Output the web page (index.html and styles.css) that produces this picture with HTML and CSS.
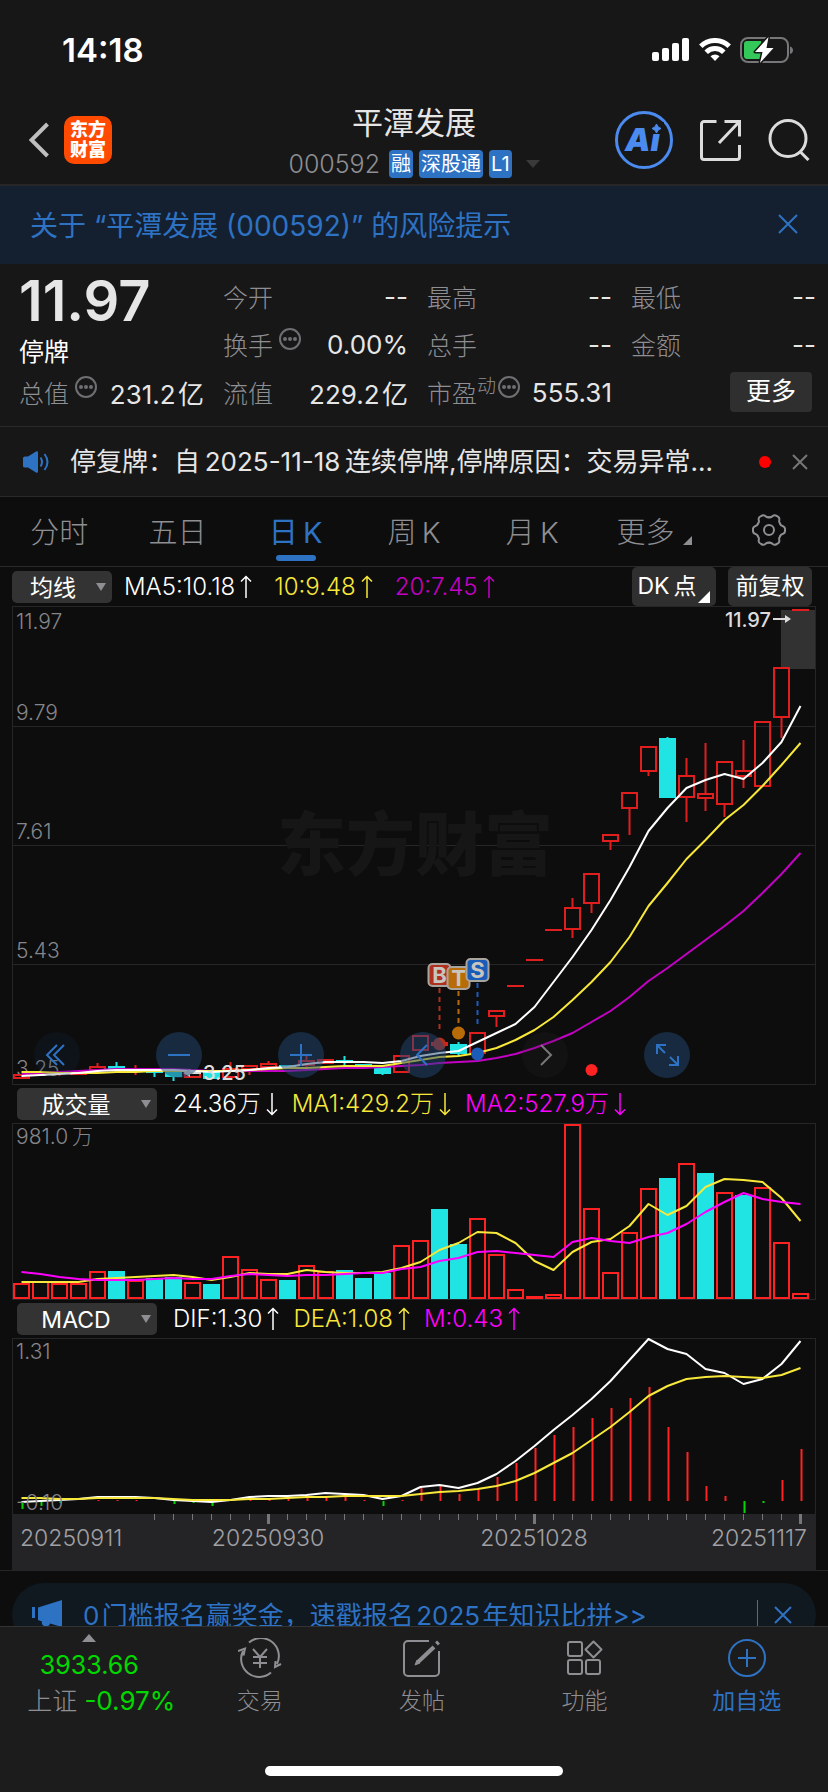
FILE: index.html
```html
<!DOCTYPE html>
<html lang="zh-CN">
<head>
<meta charset="utf-8">
<meta name="viewport" content="width=device-width, initial-scale=1">
<title>平潭发展 000592</title>
<link rel="stylesheet" href="styles.css">
</head>
<body>
<div class="screen">
  <main class="content">
    <div class="status">
      <span class="clock">14:18</span>
      <div class="status-icons">
        <svg width="38" height="24" viewBox="0 0 38 24" fill="#fff"><rect x="0" y="14" width="7" height="9" rx="2"/><rect x="10" y="10" width="7" height="13" rx="2"/><rect x="20" y="5" width="7" height="18" rx="2"/><rect x="30" y="0" width="7" height="23" rx="2"/></svg>
        <svg width="32" height="24" viewBox="0 0 32 24" fill="none" stroke="#fff" stroke-width="5"><path d="M1.800 8.200a20.500 20.500 0 0 1 28.400 0"/><path d="M7.200 14.200a12.600 12.600 0 0 1 17.600 0"/><path d="M11.500 18.300a6.600 6.600 0 0 1 9 0L16 23z" fill="#fff" stroke="none"/></svg>
        <svg width="54" height="26" viewBox="0 0 54 26"><rect x="1" y="1" width="47" height="24" rx="7" fill="none" stroke="#77777a" stroke-width="2"/><path d="M7 4h14v18H7a3 3 0 0 1-3-3V7a3 3 0 0 1 3-3z" fill="#34c759"/><path d="M50 9.500c4 1 4 6.500 0 7.500z" fill="#77777a"/><path d="M28.500 0 15 15h7.500L20 26 33.500 11h-7z" fill="#fff" stroke="#171717" stroke-width="3" paint-order="stroke" stroke-linejoin="round"/></svg>
      </div>
    </div>

    <header class="header">
      <div class="header-left">
        <button class="icon-btn" aria-label="返回"><svg width="20" height="36" viewBox="0 0 20 36" fill="none" stroke="#bfbfbf" stroke-width="4"><path d="M18.500 2 2.500 18l16 16"/></svg></button>
        <a class="logo" href="#"><span>东方</span><span>财富</span></a>
      </div>
      <div class="title-block">
        <h1>平潭发展</h1>
        <div class="subtitle"><span class="code">000592</span><span class="tag">融</span><span class="tag">深股通</span><span class="tag">L1</span><svg class="sub-caret" width="14" height="8" viewBox="0 0 14 8"><path d="M0 0h14L7 8z" fill="#3a3a3a"/></svg></div>
      </div>
      <div class="header-right">
        <button class="icon-btn" aria-label="Ai"><svg width="58" height="58" viewBox="0 0 58 58"><circle cx="29" cy="29" r="27.500" fill="none" stroke="#4b8bf0" stroke-width="3"/><text class="ai" x="10" y="40">Ai</text><rect x="35" y="11" width="14" height="12" fill="#171717"/><path d="M41.500 13q1 3.500 4.500 4.500-3.500 1-4.500 4.500-1-3.500-4.500-4.500 3.500-1 4.500-4.500z" fill="#4b8bf0" stroke="#4b8bf0"/></svg></button>
        <button class="icon-btn" aria-label="分享"><svg width="41" height="41" viewBox="0 0 41 41" fill="none" stroke="#dcdcdc" stroke-width="3"><path d="M16.500 1.500H4a2.500 2.500 0 0 0-2.500 2.500v33A2.500 2.500 0 0 0 4 39.500h33a2.500 2.500 0 0 0 2.500-2.500V25M24.500 1.500h15v15M39 2 19 23"/></svg></button>
        <button class="icon-btn" aria-label="搜索"><svg width="42" height="42" viewBox="0 0 42 42" fill="none" stroke="#dcdcdc" stroke-width="3"><circle cx="20" cy="19.500" r="18"/><path d="m31.500 32 9 9" stroke-width="3"/></svg></button>
      </div>
    </header>

    <div class="notice">
      <a href="#">关于 “平潭发展 (000592)” 的风险提示</a>
      <button class="icon-btn" aria-label="关闭"><svg width="20" height="20" viewBox="0 0 20 20" stroke="#2e72c4" stroke-width="2"><path d="m1 1 18 18M19 1 1 19"/></svg></button>
    </div>

    <section class="quote">
      <div class="price-box"><strong class="price">11.97</strong><span class="state">停牌</span></div>
      <div class="cell"><span class="lbl">今开</span><span>--</span></div>
      <div class="cell"><span class="lbl">最高</span><span>--</span></div>
      <div class="cell"><span class="lbl">最低</span><span>--</span></div>
      <div class="cell"><span class="lbl">换手<svg class="info"><use href="#dots"/></svg></span><span>0.00%</span></div>
      <div class="cell"><span class="lbl">总手</span><span>--</span></div>
      <div class="cell"><span class="lbl">金额</span><span>--</span></div>
      <div class="cell"><span class="lbl">总值<svg class="info"><use href="#dots"/></svg></span><span>231.2&#8202;亿</span></div>
      <div class="cell"><span class="lbl">流值</span><span>229.2&#8202;亿</span></div>
      <div class="cell pe"><span class="lbl">市盈<small>动</small><svg class="info"><use href="#dots"/></svg></span><span>555.31</span></div>
      <div class="cell end"><button class="more">更多</button></div>
    </section>

    <div class="news">
      <svg width="28" height="22" viewBox="0 0 28 22" fill="none" stroke="#2e72c4" stroke-width="2"><path d="M1 7q0-1.500 2-1.500h3L14 .5q2-1 2 1v19q0 2-2 1l-8-5H3q-2 0-2-1.500z" fill="#2e72c4" stroke="none"/><path d="M18.500 6.500q3 4.500 0 9M22.500 3q6 8 0 16"/></svg>
      <a class="news-text" href="#">停复牌：自&#8201;2025-11-18&#8201;连续停牌,停牌原因：交易异常...</a>
      <i class="red-dot"></i>
      <button class="icon-btn" aria-label="关闭公告"><svg width="16" height="16" viewBox="0 0 16 16" stroke="#77777a" stroke-width="2"><path d="m1 1 14 14M15 1 1 15"/></svg></button>
    </div>

    <nav class="tabs" aria-label="周期">
      <button>分时</button><button>五日</button><button class="active">日&#8201;K</button><button>周&#8201;K</button><button>月&#8201;K</button>
      <button class="tab-more">更多<svg class="corner" width="9" height="9" viewBox="0 0 9 9"><path d="M9 0v9H0z" fill="#8e8e93"/></svg></button>
      <button aria-label="设置"><svg width="34" height="34" viewBox="-17 -17 34 34" fill="none" stroke="#8e8e93" stroke-width="2" stroke-linecap="round"><circle r="5"/><path id="tooth" d="M11-6.400Q11.600-4.400 14-3.800 16.400-3 16 0 16.400 3 14 3.800 11.600 4.400 11 6.400"/><use href="#tooth" transform="rotate(60)"/><use href="#tooth" transform="rotate(120)"/><use href="#tooth" transform="rotate(180)"/><use href="#tooth" transform="rotate(240)"/><use href="#tooth" transform="rotate(300)"/></svg></button>
    </nav>

    <section class="charts">
      <div class="bar main-bar">
        <div class="pick narrow"><select aria-label="主图指标"><option>均线</option></select><svg class="pick-caret" width="10" height="8"><use href="#caret"/></svg></div>
        <span class="white">MA5:10.18<svg class="arrow"><use href="#up"/></svg></span>
        <span class="yellow">10:9.48<svg class="arrow"><use href="#up"/></svg></span>
        <span class="purple">20:7.45<svg class="arrow"><use href="#up"/></svg></span>
        <div class="bar-end"><button class="chip">DK&#8201;点<svg class="chip-corner" width="12" height="12" viewBox="0 0 12 12"><path d="M12 0v12H0z" fill="#fff"/></svg></button><button class="chip">前复权</button></div>
      </div>
      <div class="k-wrap">
        <svg id="kline" class="plot" viewBox="12 606 804 479"></svg>
        <div class="tools">
          <button class="dim" aria-label="最早"><svg viewBox="0 0 46 46"><path d="M23 13 13 23l10 10M30 13 20 23l10 10"/></svg></button>
          <button aria-label="缩小"><svg viewBox="0 0 46 46"><path d="M12 23h22"/></svg></button>
          <button aria-label="放大"><svg viewBox="0 0 46 46"><path d="M12 23h22M23 12v22"/></svg></button>
          <button aria-label="向前"><svg viewBox="0 0 46 46"><path d="M27 13 17 23l10 10"/></svg></button>
          <button class="off" aria-label="向后"><svg viewBox="0 0 46 46"><path d="m19 13 10 10-10 10"/></svg></button>
          <button aria-label="全屏"><svg viewBox="0 0 46 46"><path d="M13 22v-9h9M13 13l8 8M34 24v9h-9M34 33l-8-8"/></svg></button>
        </div>
      </div>
      <div class="bar">
        <div class="pick"><select aria-label="副图一"><option>成交量</option></select><svg class="pick-caret" width="10" height="8"><use href="#caret"/></svg></div>
        <span class="white">24.36万<svg class="arrow"><use href="#down"/></svg></span>
        <span class="yellow">MA1:429.2万<svg class="arrow"><use href="#down"/></svg></span>
        <span class="magenta">MA2:527.9万<svg class="arrow"><use href="#down"/></svg></span>
      </div>
      <svg id="volume" class="plot" viewBox="12 1123 804 177"></svg>
      <div class="bar">
        <div class="pick"><select aria-label="副图二"><option>MACD</option></select><svg class="pick-caret" width="10" height="8"><use href="#caret"/></svg></div>
        <span class="white">DIF:1.30<svg class="arrow"><use href="#up"/></svg></span>
        <span class="yellow">DEA:1.08<svg class="arrow"><use href="#up"/></svg></span>
        <span class="magenta">M:0.43<svg class="arrow"><use href="#up"/></svg></span>
      </div>
      <svg id="macd" class="plot" viewBox="12 1338 804 232"></svg>
    </section>

    <div class="promo-area">
      <div class="promo">
        <svg width="30" height="30" viewBox="0 0 30 30" fill="#2e72c4"><path d="M0 7h3v11H0zM6 7.500 30 0v27l-12-3.500q-1 4-6 2.500-3-1.500-2-4.500L6 20z"/></svg>
        <a href="#">0&#8202;门槛报名赢奖金，速戳报名&#8202;2025&#8202;年知识比拼&gt;&gt;</a>
        <i class="promo-line"></i>
        <button class="icon-btn" aria-label="关闭活动"><svg width="18" height="18" viewBox="0 0 18 18" stroke="#2e72c4" stroke-width="2"><path d="m1 1 16 16M17 1 1 17"/></svg></button>
      </div>
    </div>
  </main>

  <footer class="dock">
    <nav class="dock-row" aria-label="底部导航">
      <a class="index" href="#"><svg width="14" height="8" viewBox="0 0 14 8"><path d="M7 0l7 8H0z" fill="#8e8e93"/></svg><span class="idx-val">3933.66</span><span class="idx-line">上证 <b>-0.97%</b></span></a>
      <button><svg width="44" height="40" viewBox="0 0 44 40"><path d="M11 4.500A18 18 0 0 1 39 26M33 34.500A18 18 0 0 1 5 13M0 13l7-2.500-1.500 7M43 26l-6 3 .5-6"/><path d="m15 11 7 8 7-8M22 19v11M15 19h14M15 25h14"/></svg>交易</button>
      <button><svg width="40" height="40" viewBox="0 0 40 40"><path d="M27 3H6a4 4 0 0 0-4 4v27a4 4 0 0 0 4 4h27a4 4 0 0 0 4-4V13"/><path d="M32 9 16 24" stroke-width="4"/><path d="m15 22-2 5 5-2z" fill="#8e8e93" stroke-width="1"/><path d="m34.500 6 2-2" stroke-width="4"/></svg>发帖</button>
      <button><svg width="40" height="40" viewBox="0 0 40 40"><rect x="4" y="4" width="14" height="14" rx="2"/><rect x="4" y="22" width="14" height="14" rx="2"/><rect x="22" y="22" width="14" height="14" rx="2"/><path d="m29.500 3.500 8 8-8 8-8-8z" stroke-linejoin="round"/></svg>功能</button>
      <button class="add"><svg width="40" height="40" viewBox="0 0 40 40"><circle cx="20" cy="20" r="18"/><path d="M11 20h18M20 11v18"/></svg>加自选</button>
    </nav>
    <div class="home-bar"></div>
  </footer>
</div>

<svg class="sprite" aria-hidden="true">
  <symbol id="dots" viewBox="0 0 22 22"><circle cx="11" cy="11" r="10" fill="none" stroke="#6f6f73" stroke-width="2"/><circle cx="6" cy="11" r="2" fill="#6f6f73"/><circle cx="11" cy="11" r="2" fill="#6f6f73"/><circle cx="16" cy="11" r="2" fill="#6f6f73"/></symbol>
  <symbol id="caret" viewBox="0 0 10 8"><path d="M0 0h10L5 8z" fill="#8e8e93"/></symbol>
  <symbol id="up" viewBox="0 0 12 24"><path d="M6 23V1.500M1 6.500l5-5 5 5" fill="none" stroke="currentColor" stroke-width="1.500"/></symbol>
  <symbol id="down" viewBox="0 0 12 24"><path d="M6 1v21.500M1 17.500l5 5 5-5" fill="none" stroke="currentColor" stroke-width="1.500"/></symbol>
</svg>
<script src="charts.js"></script>
</body>
</html>
```

FILE: styles.css
```css
* { box-sizing: border-box; }
body { margin: 0; background: #171717; color: #e6e6e6; font-family: Inter, "Noto Sans CJK SC", sans-serif; font-size: 25px; }
button, select { font: inherit; color: inherit; background: none; border: 0; padding: 0; margin: 0; }
a { color: inherit; text-decoration: none; }
svg { display: block; flex: none; }
.sprite { position: absolute; width: 0; height: 0; }
.screen { height: 100vh; display: flex; flex-direction: column; }
.content { flex: 1; min-height: 0; overflow: hidden; }
.icon-btn { flex: none; display: block; }

.status { display: flex; justify-content: space-between; align-items: center; height: 100px; padding: 0 34px 0 62px; }
.clock { font-size: 33px; font-weight: 600; color: #fff; }
.status-icons { display: flex; align-items: center; gap: 9px; }

.header { display: grid; grid-template-columns: 1fr auto 1fr; align-items: center; height: 86px; padding: 0 18px 2px; border-bottom: 2px solid #262626; }
.header-left, .header-right { display: flex; align-items: center; padding-bottom: 2px; }
.header-left { gap: 15px; padding-left: 11px; }
.header-right { justify-content: flex-end; gap: 27px; }
.logo { display: flex; flex-direction: column; align-items: center; justify-content: center; width: 48px; height: 48px; border-radius: 10px; background: #ff4a00; color: #fff; font-size: 18px; line-height: 20px; font-weight: 900; }
.title-block { display: flex; flex-direction: column; align-items: center; }
h1 { margin: 0; font-size: 31px; line-height: 46px; font-weight: 400; }
.subtitle { display: flex; align-items: center; height: 36px; gap: 6px; }
.code { font-size: 25px; color: #8e8e93; font-weight: 300; margin-right: 3px; }
.tag { background: #2e72c4; color: #fff; border-radius: 4px; font-size: 20px; line-height: 28px; padding: 0 2px; }
.sub-caret { margin-left: 8px; }
.ai { font-size: 32px; font-weight: 900; font-style: italic; fill: #4b8bf0; }

.notice { display: flex; align-items: center; justify-content: space-between; height: 78px; padding: 0 30px 2px; background: #14202f; color: #2e72c4; font-size: 28px; }

.quote { display: grid; grid-template-columns: repeat(4, 1fr); grid-auto-rows: 48px; column-gap: 19px; padding: 8px 12px 10px 19px; border-bottom: 1px solid #2a2a2a; }
.price-box { grid-row: span 2; display: flex; flex-direction: column; }
.price { font-size: 56px; line-height: 58px; font-weight: 600; }
.state { line-height: 44px; color: #fff; }
.cell { display: flex; align-items: center; justify-content: space-between; white-space: nowrap; font-size: 26px; }
.lbl { display: flex; align-items: center; color: #8e8e93; font-weight: 300; font-size: 25px; }
.lbl small { font-size: 19px; padding-bottom: 16px; }
.info { width: 22px; height: 22px; margin: 0 0 10px 6px; }
.pe .info { margin-left: 2px; }
.end { justify-content: flex-end; padding-right: 4px; }
.more { width: 82px; height: 40px; border-radius: 4px; background: #2f2f2f; color: #fff; font-size: 25px; line-height: 38px; padding-bottom: 2px; }

.news { display: flex; align-items: center; height: 70px; padding: 0 20px 0 22px; border-bottom: 1px solid #2a2a2a; }
.news-text { flex: 1; margin-left: 20px; padding-bottom: 4px; white-space: nowrap; font-size: 26px; }
.red-dot { width: 12px; height: 12px; border-radius: 50%; background: #f00; margin-right: 21px; }

.tabs { display: grid; grid-template-columns: repeat(7, 1fr); height: 70px; background: #0d0d0d; border-bottom: 1px solid #2a2a2a; color: #8e8e93; font-size: 29px; font-weight: 300; }
.tabs button { position: relative; display: flex; align-items: center; justify-content: center; padding-bottom: 4px; }
.tabs .active { color: #2e72c4; font-weight: 400; }
.tabs .active::after { content: ""; position: absolute; bottom: 5px; width: 40px; height: 6px; border-radius: 3px; background: #2e72c4; }
.tabs .tab-more { padding-left: 7px; }
.corner { margin: 22px 0 0 8px; }

.charts { background: #0d0d0d; padding: 0 12px; }
.bar { display: flex; align-items: center; gap: 14px; height: 38px; padding-left: 5px; font-size: 24px; font-weight: 300; white-space: nowrap; }
.bar .pick + span { margin-left: 2px; }
.main-bar { height: 39px; padding-left: 0; gap: 22px; }
.main-bar .pick { margin-right: -12px; }
.bar span { display: flex; align-items: center; line-height: 32px; }
.arrow { width: 12px; height: 24px; margin-left: 5px; }
.white { color: #fff; }
.yellow { color: #f8e83a; }
.purple { color: #c400c4; }
.magenta { color: #f0f; }
.pick { position: relative; width: 140px; height: 32px; border-radius: 5px; background: #333; color: #fff; font-weight: 400; font-size: 23px; }
.pick select { appearance: none; width: 100%; height: 100%; padding: 2px 22px 0 0; text-align: center; text-align-last: center; }
.pick.narrow { width: 100px; }
.pick.narrow select { padding-right: 18px; }
.pick-caret { position: absolute; right: 6px; top: 12px; pointer-events: none; }
.bar-end { display: flex; gap: 12px; margin-left: auto; padding-right: 4px; }
.chip { position: relative; width: 84px; height: 39px; border-radius: 5px; background: #2f2f2f; color: #fff; font-size: 23px; line-height: 39px; font-weight: 400; text-align: center; white-space: nowrap; }
.chip:first-child { padding-right: 14px; }
.chip-corner { position: absolute; right: 6px; bottom: 3px; }

.plot { width: 100%; height: auto; }
.plot text { font-size: 21px; fill: #85858a; font-weight: 300; }
.plot .tag-text { fill: #dcdcdc; font-weight: 500; font-size: 20px; }
.plot .mark-text { fill: #c8c4c0; font-weight: 700; font-size: 22px; }
.plot .axis-text { fill: #a0a0a5; font-size: 23px; }
.plot .watermark { fill: #161616; font-weight: 900; font-size: 69px; }
.k-wrap { position: relative; }
.tools { position: absolute; left: 22px; bottom: 7px; display: flex; gap: 76px; }
.tools button { width: 46px; height: 46px; border-radius: 50%; background: rgba(34, 72, 116, .5); }
.tools .dim { background: rgba(20, 45, 75, .2); }
.tools .off { background: rgba(40, 40, 40, .2); }
.tools path { fill: none; stroke: #2e72c4; stroke-width: 2; }
.tools .off path { stroke: #77777a; }

.promo-area { background: #0d0d0d; border-top: 1px solid #262626; padding: 12px 12px 0; }
.promo { display: flex; align-items: center; height: 64px; padding: 0 24px 0 20px; border-radius: 32px; background: #101820; color: #2e72c4; font-size: 26px; }
.promo a { flex: 1; margin-left: 21px; padding-bottom: 3px; white-space: nowrap; }
.promo-line { width: 1px; height: 30px; margin-right: 16px; background: #2e72c4; }

.dock { background: #1c1c1c; border-top: 1px solid #333; padding-bottom: 16px; }
.dock-row { display: grid; grid-template-columns: 22fr 20fr 20fr 20fr 20fr; height: 139px; color: #8e8e93; font-weight: 300; }
.dock-row button { display: flex; flex-direction: column; align-items: center; padding-top: 11px; font-size: 23px; line-height: 46px; }
.dock-row button svg { fill: none; stroke: #8e8e93; stroke-width: 2; }
.dock-row .add { color: #2e72c4; font-weight: 400; }
.dock-row .add svg { stroke: #2e72c4; }
.index { display: flex; flex-direction: column; align-items: center; padding-top: 7px; white-space: nowrap; }
.idx-val { color: #00d800; font-size: 25px; line-height: 47px; font-weight: 400; }
.idx-line { line-height: 24px; padding-left: 24px; }
.idx-line b { color: #00d800; font-weight: 400; font-size: 26px; }
.home-bar { width: 36%; height: 10px; margin: 0 auto; border-radius: 5px; background: #fff; }
```

FILE: charts.js
```js
const RED = '#e01e1e', BRIGHT = '#ff2222', CYAN = '#20e4e4', GRID = '#262628';
const x = i => 21.5 + 19 * i;
const rect = (l, t, w, h, fill, stroke) =>
  `<rect x="${l}" y="${t}" width="${w}" height="${h}" fill="${fill}"${stroke ? ` stroke="${stroke}" stroke-width="2"` : ''}/>`;
const seg = (x1, y1, x2, y2, c, w = 1, extra = '') =>
  `<path d="M${x1} ${y1}L${x2} ${y2}" stroke="${c}" stroke-width="${w}" ${extra}/>`;
const line = (ys, c) =>
  `<polyline points="${ys.map((y, i) => x(i) + ',' + y).join(' ')}" fill="none" stroke="${c}" stroke-width="2" stroke-linejoin="round"/>`;
const text = (tx, ty, s, cls = '', anchor = 'start') =>
  `<text x="${tx}" y="${ty}" class="${cls}" text-anchor="${anchor}">${s}</text>`;
const frame = (t, h) => rect(12.5, t + 0.5, 803, h - 1, 'none').replace('/>', ` stroke="${GRID}"/>`);

/* each candle: body top, body bottom, high, low, falling */
const candles = [
  [1075,1078,1075,1079],[1074,1075,1073,1076],[1073,1074,1072,1076],[1072,1074,1071,1075],[1067,1070,1063,1073],
  [1066,1069,1062,1071,1],[1070,1071,1065,1075],[1071,1073,1070,1077,1],[1070,1077,1069,1081,1],[1073,1077,1073,1078],
  [1072,1079,1072,1079,1],[1069,1077,1062,1077],[1066,1069,1065,1075],[1064,1067,1061,1067],[1065,1067,1065,1067,1],
  [1061,1065,1056,1068],[1060,1063,1059,1064],[1060,1063,1056,1065,1],[1064,1066,1064,1067,1],[1067,1074,1067,1075,1],
  [1056,1072,1056,1073],[1036,1050,1036,1050],[1043,1045,1041,1047],[1044,1054,1042,1056,1],[1033,1053,1033,1053],
  [1011,1016,1011,1027],[986,986,986,986],[960,960,960,960],[930,930,930,930],[908,929,898,938],
  [874,903,874,913],[835,841,835,850],[793,808,793,835],[747,771,747,776],[738,798,737,798,1],
  [776,797,758,822],[794,798,743,811],[762,804,762,817],[771,776,740,788],[722,786,722,786],[668,717,668,738],[610,610,610,610]
];
const ma5 = [1076,1075,1074,1073,1071,1070,1070,1070,1070,1071,1072,1071,1070,1068,1067,1064,1062,1062,1062,1063,1061,1056,1053,1051,1042,1033,1024,1007,982,957,930,900,867,831,808,788,780,774,779,763,742,706];
const ma10 = [1072,1072,1073,1073,1073,1072,1072,1071,1071,1071,1071,1071,1070,1069,1068,1068,1067,1066,1066,1066,1063,1060,1057,1056,1053,1048,1040,1030,1017,1000,982,962,937,906,883,859,840,820,805,786,765,743];
const ma20 = [1074,1073,1072,1071,1070,1069,1069,1069,1069,1070,1071,1071,1071,1071,1071,1070,1069,1068,1068,1067,1066,1065,1063,1062,1061,1058,1054,1048,1041,1033,1022,1011,997,981,968,954,940,926,911,893,874,853];

let k = frame(606, 479) + [726.5, 845.5, 964.5].map(y => seg(13, y, 815, y, GRID)).join('');
k += text(415, 870, '东方财富', 'watermark', 'middle');
k += rect(781, 610, 34, 59, '#323232');
[['11.97', 629], ['9.79', 720], ['7.61', 839], ['5.43', 958], ['3.25', 1076]].forEach(a => k += text(16, a[1], a[0]));
candles.forEach(([t, b, hi, lo, down], i) => {
  const c = down ? CYAN : RED, h = b - t;
  if (down) k += seg(x(i), hi, x(i), lo, c, 2) + rect(x(i) - 8.5, t, 17, h, c);
  else {
    k += seg(x(i), hi, x(i), t, c, 2) + seg(x(i), b, x(i), lo, c, 2);
    k += h < 2 ? rect(x(i) - 8.5, t - 1, 17, 2, c) : rect(x(i) - 7.5, t, 15, h, 'none', c);
  }
});
k += line(ma20, '#c400c4') + line(ma10, '#f8e83a') + line(ma5, '#fff');
k += text(771, 627, '11.97', 'tag-text', 'end') + seg(773, 619, 787, 619, '#dcdcdc', 2) + '<path d="M785 615l6 4-6 4z" fill="#dcdcdc"/>';
k += text(203, 1080, '3.25', 'tag-text') + seg(188, 1073, 201, 1073, '#dcdcdc', 2) + '<path d="M190 1069l-7 4 7 4z" fill="#dcdcdc"/>';
[['B', 439.5, 975, 1031, '#b0301f', 1044], ['T', 458.5, 978, 1027, '#b86c08', 1033], ['S', 477.5, 970, 1026, '#1a5cb8', 1054]].forEach(([s, cx, cy, end, c, dot]) => {
  k += seg(cx, cy + 13, cx, end, c, 2, 'stroke-dasharray="5 4"');
  k += `<circle cx="${cx}" cy="${dot}" r="6.5" fill="${c}"/>`;
  k += `<rect x="${cx - 11}" y="${cy - 11}" width="22" height="22" rx="4" fill="${c}" stroke="#aaa49e" stroke-width="2"/>`;
  k += text(cx, cy + 8, s, 'mark-text', 'middle');
});
k += `<circle cx="591.5" cy="1070" r="6" fill="${BRIGHT}"/>`;
document.getElementById('kline').innerHTML = k;

const tops = [1283,1281,1283,1283,1271,1271,1280,1278,1277,1282,1284,1256,1269,1279,1280,1265,1271,1270,1278,1273,1245,1240,1209,1244,1218,1254,1289,1296,1294,1124,1208,1272,1232,1188,1178,1163,1173,1192,1195,1187,1242,1293];
const falling = new Set([5, 7, 8, 10, 14, 17, 18, 19, 22, 23, 34, 36, 38]);
const vma1 = [1282,1282,1282,1282,1279,1278,1277,1276,1275,1277,1280,1277,1273,1274,1274,1270,1272,1273,1273,1272,1268,1262,1250,1243,1232,1233,1243,1261,1270,1252,1242,1239,1226,1204,1215,1206,1187,1179,1180,1182,1198,1221];
const vma2 = [1272,1274,1277,1279,1280,1280,1280,1279,1278,1279,1279,1276,1274,1275,1276,1275,1275,1274,1273,1273,1269,1267,1261,1258,1252,1251,1253,1255,1257,1242,1238,1241,1243,1237,1233,1224,1212,1202,1193,1199,1202,1204];
let v = frame(1123, 177) + text(16, 1144, '981.0\u2009万');
tops.forEach((t, i) => {
  v += falling.has(i) ? rect(x(i) - 8.5, t, 17, 1299 - t, CYAN) : rect(x(i) - 7.5, t + 1, 15, 1298 - t - 1, 'none', BRIGHT);
});
v += line(vma1, '#f8e83a') + line(vma2, '#f0f');
document.getElementById('volume').innerHTML = v;

const bars = [-8,-5,-2,0,1,1,1,0,-3,-2,-5,0,2,3,2,3,4,4,1,-5,1,13,15,7,12,24,38,53,66,74,83,93,103,114,74,49,15,5,-12,-2,21,52];
const dif = [1502,1501,1500,1499,1497,1497,1497,1498,1500,1501,1502,1500,1497,1496,1496,1495,1493,1494,1495,1499,1496,1487,1485,1488,1483,1474,1461,1446,1430,1415,1399,1381,1360,1339,1349,1354,1369,1373,1384,1379,1364,1341];
const dea = [1498,1498,1499,1499,1498,1498,1498,1498,1499,1500,1500,1500,1499,1499,1498,1497,1497,1496,1496,1496,1496,1494,1492,1491,1489,1486,1481,1473,1463,1453,1440,1427,1412,1396,1386,1379,1377,1376,1377,1378,1375,1368];
let m = frame(1338, 177) + rect(12, 1514, 804, 56, '#242426') + text(16, 1359, '1.31');
bars.forEach((b, i) => {
  if (b) m += seg(x(i) + 1, 1501, x(i) + 1, 1501 - b, b > 0 ? BRIGHT : '#00d800', 2);
});
m += line(dif, '#fff') + line(dea, '#f8e83a') + text(16, 1510, '-0.10');
for (let i = 7; i < 42; i++) {
  const major = i % 14 === 13;
  m += seg(x(i), 1514, x(i), major ? 1524 : 1520, '#77777a', major ? 3 : 1);
}
m += text(20, 1546, '20250911', 'axis-text') + text(268, 1546, '20250930', 'axis-text', 'middle') +
  text(534, 1546, '20251028', 'axis-text', 'middle') + text(807, 1546, '20251117', 'axis-text', 'end');
document.getElementById('macd').innerHTML = m;
```
